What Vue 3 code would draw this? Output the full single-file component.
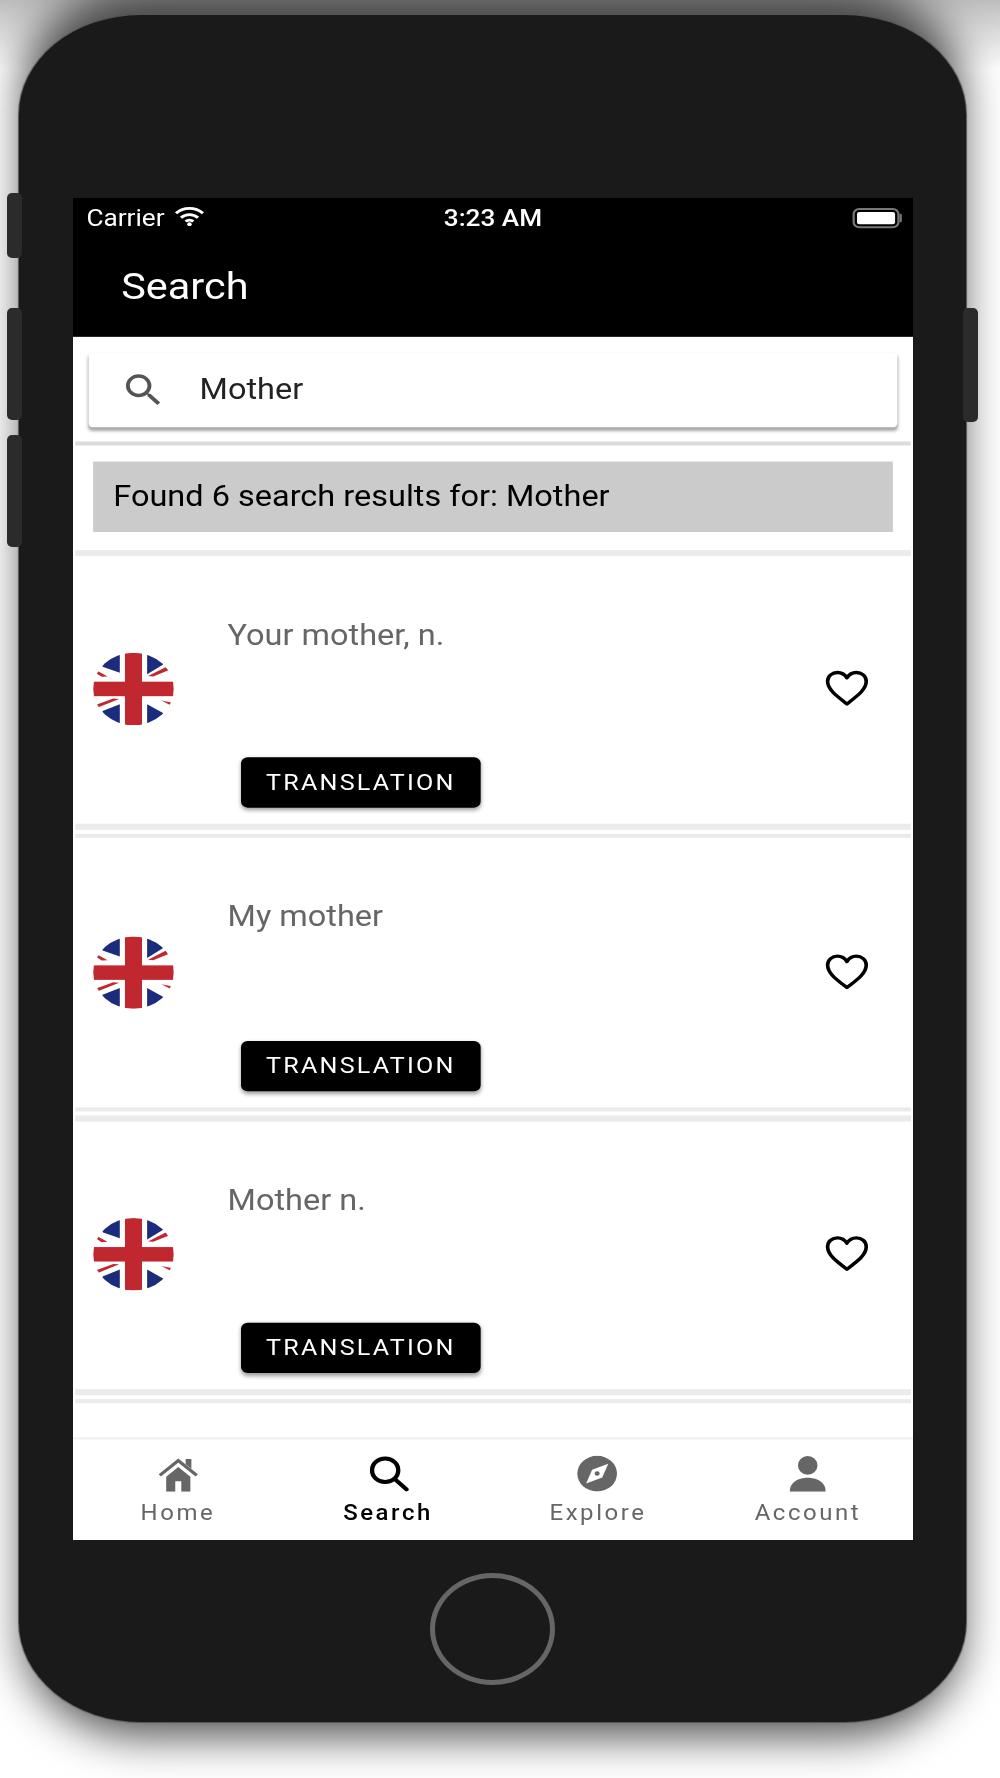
<template>
  <div class="page">
    <div class="phone">
      <span class="side-btn mute"></span>
      <span class="side-btn vol-up"></span>
      <span class="side-btn vol-down"></span>
      <span class="side-btn power"></span>

      <div class="screen-wrap">
        <div class="screen">
          <div class="header">
            <div class="status-bar">
              <div class="status-left">
                <span>Carrier</span>
                <svg class="wifi" viewBox="0 0 14 10">
                  <path d="M1 3.6a8.6 8.6 0 0 1 12 0" />
                  <path d="M3.2 5.8a5.4 5.4 0 0 1 7.6 0" />
                  <path d="M5.3 7.7a2.4 2.4 0 0 1 3.4 0" />
                  <circle cx="7" cy="9" r="1" />
                </svg>
              </div>
              <span class="clock">3:23 AM</span>
              <div class="battery"><i></i></div>
            </div>
            <div class="app-bar">Search</div>
          </div>

          <div class="content">
            <div class="search-box">
              <svg class="search-icon" viewBox="0 0 24 24"><path :d="magnify" /></svg>
              <span class="search-value">Mother</span>
            </div>
            <div class="thin-line"></div>
            <div class="found">Found 6 search results for: Mother</div>
            <div class="line"></div>

            <div v-for="item in results" :key="item" class="result">
              <div class="row">
                <svg class="flag" viewBox="0 0 36 36">
                  <rect width="36" height="36" fill="#fff" />
                  <g fill="#1b2c7c">
                    <polygon points="11.9,0 11.9,10 4.2,7 2,0" />
                    <polygon points="24.1,0 24.1,10.7 32,5.3 30,0" />
                    <polygon points="11.9,36 11.9,25.6 4.2,29 2,36" />
                    <polygon points="24.1,36 24.1,25.6 32,30.5 30,36" />
                  </g>
                  <g fill="#c1272f">
                    <polygon points="24.5,11.6 33,6.8 34.5,8.4 26.8,11.8" />
                    <polygon points="0.8,9.8 1.8,9 6.4,11.8 3.8,12" />
                    <polygon points="1.8,27.4 11.6,23 9,22.8 1,26" />
                    <polygon points="30.5,23.8 36,25 35,26.4" />
                    <rect x="14.2" y="0" width="7.6" height="36" />
                    <rect x="0" y="14.4" width="36" height="7.2" />
                  </g>
                </svg>
                <div class="row-body">
                  <div class="row-title">{{ item }}</div>
                  <div class="tag">TRANSLATION</div>
                </div>
                <svg class="heart" viewBox="0 0 24 24">
                  <path d="M12 20.3C7 16 3 12.8 3 8.6 3 5.8 5.2 4 7.6 4 9.4 4 11 5 12 6.8 13 5 14.6 4 16.4 4 18.8 4 21 5.8 21 8.6 21 12.8 17 16 12 20.3Z" />
                </svg>
              </div>
              <div class="line"></div>
              <div class="line second"></div>
            </div>
          </div>

          <div class="tabs">
            <div v-for="tab in tabs" :key="tab.label" class="tab" :class="{ active: tab.active }">
              <svg v-if="tab.label === 'Home'" class="tab-icon" viewBox="0 0 24 24">
                <path d="M4.8 14 12 7.6l7.2 6.4V24h-5.4v-7h-3.6v7H4.8z" />
                <path d="M16.4 2.4h3.4v6.4l-3.4-3z" />
                <path class="roof" d="M1 13.2 12 3.4l11 9.8" />
              </svg>
              <svg v-else-if="tab.label === 'Search'" class="tab-icon" viewBox="0 0 24 24">
                <circle class="ring" cx="9.8" cy="9.8" r="7.8" />
                <path class="ring" d="M15.6 15.6 22.5 22.5" />
              </svg>
              <svg v-else-if="tab.label === 'Explore'" class="tab-icon" viewBox="0 0 24 24">
                <circle cx="12" cy="12" r="11.8" />
                <path fill="#fff" d="M18.6 5.4 15 14.6 5.4 18.6 9 9.4z" />
                <circle cx="12" cy="12" r="1.5" />
              </svg>
              <svg v-else class="tab-icon" viewBox="0 0 24 24">
                <ellipse cx="12" cy="6.6" rx="5.8" ry="6.2" />
                <path d="M1.4 24c-.4-6.4 5.6-9.2 10.6-9.2s11 2.8 10.6 9.2z" />
              </svg>
              <span class="tab-label">{{ tab.label }}</span>
            </div>
          </div>
        </div>
      </div>

      <div class="home-btn"></div>
    </div>
  </div>
</template>

<script setup>
const magnify = 'M9.5,3A6.5,6.5 0 0,1 16,9.5C16,11.11 15.41,12.59 14.44,13.73L14.71,14H15.5L20.5,19L19,20.5L14,15.5V14.71L13.73,14.44C12.59,15.41 11.11,16 9.5,16A6.5,6.5 0 0,1 3,9.5A6.5,6.5 0 0,1 9.5,3M9.5,5C7,5 5,7 5,9.5C5,12 7,14 9.5,14C12,14 14,12 14,9.5C14,7 12,5 9.5,5Z'

const results = ['Your mother, n.', 'My mother', 'Mother n.']

const tabs = [
  { label: 'Home' },
  { label: 'Search', active: true },
  { label: 'Explore' },
  { label: 'Account' }
]
</script>

<style scoped>
.page {
  position: relative;
  isolation: isolate;
  width: 1000px;
  height: 1778px;
  background: linear-gradient(rgba(0, 0, 0, 0.26), rgba(0, 0, 0, 0) 70px), #fff;
  overflow: hidden;
  padding: 15px 0 0 19px;
  box-sizing: border-box;
  font-family: Roboto, "Liberation Sans", sans-serif;
}

.phone {
  position: relative;
  width: 947px;
  height: 1707px;
  background: #1a1a1a;
  border-radius: 122px / 100px;
  box-shadow: 0 0 1px 1px #555;
  padding-top: 183px;
  box-sizing: border-box;
}

/* the shadow is taller than it is wide, a box-shadow can't do that */
.phone::before {
  content: "";
  position: absolute;
  z-index: -1;
  top: -25px;
  bottom: -15px;
  left: 4px;
  right: 4px;
  border-radius: 122px / 100px;
  background: rgba(0, 0, 0, 0.68);
  filter: blur(22px);
}

.side-btn {
  position: absolute;
  background: #2b2b2b;
  border-radius: 5px;
  width: 15px;
  left: -12px;
}
.mute { top: 178px; height: 65px; }
.vol-up { top: 293px; height: 112px; }
.vol-down { top: 420px; height: 112px; }
.power { left: auto; right: -12px; top: 293px; height: 114px; }

.screen-wrap {
  width: 840px;
  height: 1342px;
  margin: 0 0 0 54px;
}

.screen {
  width: 375px;
  height: 667px;
  transform: scale(2.24, 2.012);
  transform-origin: top left;
  background: #fff;
  display: flex;
  flex-direction: column;
  overflow: hidden;
  filter: blur(0.35px);
}

.header {
  background: #000;
  color: #fff;
  flex: none;
}

.status-bar {
  height: 20px;
  display: flex;
  align-items: center;
  justify-content: space-between;
  position: relative;
  padding: 0 3.5px 1px 6px;
  font-size: 11.7px;
}

.status-left {
  display: flex;
  align-items: center;
  gap: 4px;
}

.wifi {
  width: 14px;
  height: 10px;
  margin-bottom: 2px;
}
.wifi path {
  fill: none;
  stroke: #fff;
  stroke-width: 1.4;
}
.wifi circle { fill: #fff; }

.clock {
  position: absolute;
  left: 0;
  right: 0;
  text-align: center;
  font-weight: 500;
}

.battery {
  position: relative;
  width: 21px;
  height: 10px;
  border: 1px solid #777;
  border-radius: 3px;
  padding: 1px;
  box-sizing: border-box;
  margin: 0 3px 1px 0;
}
.battery i {
  display: block;
  height: 100%;
  background: #fff;
  border-radius: 1px;
}
.battery::after {
  content: "";
  position: absolute;
  right: -2.5px;
  top: 2px;
  width: 1.5px;
  height: 4px;
  background: #777;
}

.app-bar {
  height: 48px;
  font-size: 18.5px;
  display: flex;
  align-items: center;
  padding: 0 0 1.5px 21.5px;
  box-sizing: border-box;
}

.content {
  flex: 1;
  overflow: hidden;
}

.search-box {
  margin: 7.5px 7px 0;
  height: 37.5px;
  background: #fff;
  border-radius: 2px;
  box-shadow: 0 1.5px 1.5px rgba(0, 0, 0, 0.35);
  display: flex;
  align-items: center;
}

.search-icon {
  width: 21px;
  height: 21px;
  margin-left: 13.5px;
  fill: #555;
}

.search-value {
  margin-left: 15px;
  font-size: 14.5px;
  color: #222;
}

.thin-line {
  height: 1.5px;
  margin: 7px 1px 0;
  background: #dcdcdc;
}

.found {
  margin: 8px 9px 0;
  height: 35px;
  line-height: 35px;
  background: #cbcbcb;
  color: #000;
  font-size: 14.5px;
  padding-left: 9px;
}

.line {
  height: 2.5px;
  margin: 9.5px 1px 0;
  background: #ebebeb;
}
.row + .line { margin-top: 0; }
.line.second { margin-top: 2px; }

.row {
  height: 133.5px;
  display: flex;
  align-items: center;
  padding-left: 9px;
}

.flag {
  width: 36px;
  height: 36px;
  flex: none;
  border-radius: 50%;
}

.row-body {
  height: 100%;
  margin-left: 24px;
  padding-top: 29px;
  box-sizing: border-box;
  display: flex;
  flex-direction: column;
  align-items: flex-start;
}

.row-title {
  font-size: 14.5px;
  line-height: 21px;
  color: #666;
}

.tag {
  margin: auto 0 8px 6px;
  width: 107px;
  height: 25px;
  line-height: 25px;
  background: #000;
  color: #fff;
  font-size: 11.2px;
  letter-spacing: 1px;
  text-align: center;
  border-radius: 3px;
  box-shadow: 0 1px 2px rgba(0, 0, 0, 0.4);
}

.heart {
  width: 23px;
  height: 23px;
  margin-left: auto;
  margin-right: 18px;
  margin-bottom: 1.5px;
  fill: none;
  stroke: #000;
  stroke-width: 1.7;
  stroke-linejoin: round;
}

.tabs {
  height: 51px;
  flex: none;
  display: flex;
  background: #fff;
  border-top: 1px solid #efefef;
  box-sizing: border-box;
}

.tab {
  flex: 1;
  display: flex;
  flex-direction: column;
  align-items: center;
  padding-top: 8px;
  color: #666;
}
.tab.active { color: #000; font-weight: 500; }

.tab-icon {
  width: 18px;
  height: 18px;
  fill: currentColor;
}

.roof {
  fill: none;
  stroke: currentColor;
  stroke-width: 2;
}

.ring {
  fill: none;
  stroke: currentColor;
  stroke-width: 2.6;
  stroke-linecap: round;
}

.tab-label {
  margin-top: 4.5px;
  font-size: 10.7px;
  line-height: 12px;
  letter-spacing: 1.15px;
}

.home-btn {
  width: 125px;
  height: 112px;
  margin: 33px 0 0 411px;
  border: 5.5px solid #666;
  border-radius: 50%;
  box-sizing: border-box;
}
</style>
